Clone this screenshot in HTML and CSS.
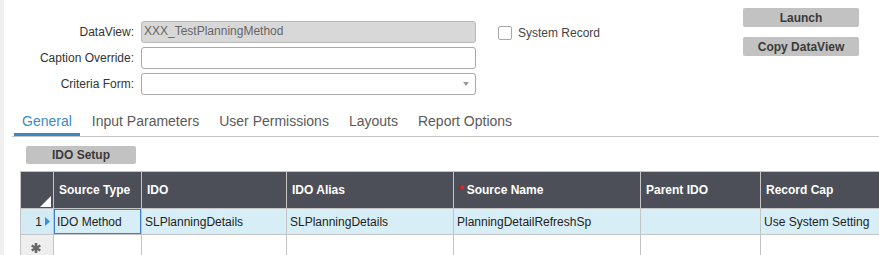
FILE: index.html
```html
<!DOCTYPE html>
<html>
<head>
<meta charset="utf-8">
<link rel="stylesheet" href="styles.css">
</head>
<body>
<div class="page">
  <div class="top">
    <div class="fields">
      <label class="lbl">DataView:</label>
      <div class="input ro">XXX_TestPlanningMethod</div>
      <label class="lbl">Caption Override:</label>
      <div class="input"></div>
      <label class="lbl">Criteria Form:</label>
      <div class="input select"><span class="caret"></span></div>
    </div>
    <label class="check"><span class="box"></span>System Record</label>
    <div class="actions">
      <button class="btn">Launch</button>
      <button class="btn">Copy DataView</button>
    </div>
  </div>
  <nav class="tabs">
    <span class="tab active">General</span>
    <span class="tab">Input Parameters</span>
    <span class="tab">User Permissions</span>
    <span class="tab">Layouts</span>
    <span class="tab">Report Options</span>
  </nav>
  <div class="toolbar"><button class="btn ido">IDO Setup</button></div>
  <div class="grid">
    <div class="hd corner"><svg width="11" height="11" viewBox="0 0 11 11"><polygon points="11,0 11,11 0,11" fill="#fff"/></svg></div>
    <div class="hd">Source Type</div>
    <div class="hd">IDO</div>
    <div class="hd">IDO Alias</div>
    <div class="hd"><span class="req">*</span>Source Name</div>
    <div class="hd">Parent IDO</div>
    <div class="hd">Record Cap</div>

    <div class="rh cur">1<svg class="ptr" width="5" height="9" viewBox="0 0 5 9"><polygon points="0,0 5,4.5 0,9" fill="#3b8fdc"/></svg></div>
    <div class="cell sel-row focus">IDO Method</div>
    <div class="cell sel-row">SLPlanningDetails</div>
    <div class="cell sel-row">SLPlanningDetails</div>
    <div class="cell sel-row">PlanningDetailRefreshSp</div>
    <div class="cell sel-row"></div>
    <div class="cell sel-row">Use System Setting</div>

    <div class="rh new"><svg width="10" height="10" viewBox="0 0 10 10"><g stroke="#686868" stroke-width="2.6"><line x1="5" y1="0" x2="5" y2="10"/><line x1="0.7" y1="2.5" x2="9.3" y2="7.5"/><line x1="0.7" y1="7.5" x2="9.3" y2="2.5"/></g></svg></div>
    <div class="cell"></div>
    <div class="cell"></div>
    <div class="cell"></div>
    <div class="cell"></div>
    <div class="cell"></div>
    <div class="cell"></div>
  </div>
</div>
</body>
</html>
```

FILE: styles.css
```css
html, body {
  margin: 0;
  padding: 0;
}
body {
  width: 879px;
  height: 255px;
  overflow: hidden;
  background: #fff;
  font-family: "Liberation Sans", Arial, sans-serif;
  color: #333;
}
.page {
  border-left: 4px solid #f0f0f0;
  height: 255px;
  box-sizing: border-box;
}
.top {
  display: flex;
  align-items: flex-start;
  padding-top: 8px;
}
.fields {
  display: grid;
  grid-template-columns: 130px 335px;
  grid-auto-rows: 22px;
  column-gap: 7px;
  row-gap: 4px;
  margin-top: 13px;
}
.lbl {
  font-size: 12px;
  color: #333;
  text-align: right;
  align-self: center;
}
.input {
  position: relative;
  box-sizing: border-box;
  height: 22px;
  border: 1px solid #a9a9a9;
  border-radius: 3px;
  background: #fff;
  font-size: 12px;
  line-height: 18px;
  padding: 0 2px;
}
.input.ro {
  background: #d8d8d8;
  border-color: #b9b9b9;
  color: #666;
}
.caret {
  position: absolute;
  right: 6px;
  top: 8px;
  width: 0;
  height: 0;
  border-left: 3px solid transparent;
  border-right: 3px solid transparent;
  border-top: 4px solid #9a9a9a;
}
.check {
  display: flex;
  align-items: center;
  gap: 6px;
  margin-left: 22px;
  margin-top: 18px;
  font-size: 12px;
  color: #444;
}
.box {
  width: 14px;
  height: 14px;
  box-sizing: border-box;
  border: 1px solid #a8a8a8;
  border-radius: 2px;
  background: #fff;
}
.actions {
  margin-left: auto;
  margin-right: 20px;
  display: flex;
  flex-direction: column;
  gap: 10px;
  width: 116px;
}
.btn {
  height: 19px;
  border: none;
  border-radius: 2px;
  background: #c2c2c2;
  font-family: "Liberation Sans", Arial, sans-serif;
  font-weight: bold;
  font-size: 12px;
  color: #3a3a3a;
  padding: 0;
}
.tabs {
  display: flex;
  margin-left: 8px;
  margin-top: 14px;
  border-bottom: 1px solid #c4c4c4;
}
.tab {
  padding: 4px 8px 3px;
  margin-right: 4px;
  font-size: 14px;
  line-height: 17px;
  color: #5a5a5a;
  border-bottom: 3px solid transparent;
}
.tab:first-child {
  margin-left: 2px;
}
.tab.active {
  color: #3d8bc8;
  border-bottom-color: #3a87c4;
}
.toolbar {
  margin-top: 8px;
  margin-left: 22px;
}
.btn.ido {
  width: 110px;
  height: 18px;
}
.grid {
  margin-top: 7px;
  margin-left: 16px;
  display: grid;
  grid-template-columns: 33px 88px 145px 167px 187px 120px 160px;
  grid-template-rows: 37px;
  grid-auto-rows: 26px;
  width: max-content;
  border-top: 1px solid #c4c4c4;
  border-left: 1px solid #c4c4c4;
}
.grid > div {
  box-sizing: border-box;
  border-right: 1px solid #c4c4c4;
  border-bottom: 1px solid #c4c4c4;
  font-size: 12px;
  display: flex;
  align-items: center;
  white-space: nowrap;
  overflow: hidden;
}
.hd {
  background: #4c4f57;
  color: #fff;
  font-weight: bold;
  padding-left: 5px;
}
.hd.corner {
  justify-content: flex-end;
  align-items: flex-end;
  padding: 0 2px 1px 0;
}
.req {
  color: #e02020;
  font-weight: bold;
  margin-right: 3px;
}
.rh {
  justify-content: flex-end;
  padding-right: 3px;
  color: #222;
}
.rh.cur {
  background: #d3ebf5;
}
.rh .ptr {
  margin-left: 3px;
}
.rh.new {
  background: #eeeeee;
  justify-content: center;
  padding-right: 2px;
}
.cell {
  padding-left: 3px;
  color: #222;
}
.cell.sel-row {
  background: #d8eef6;
}
.cell.focus {
  box-shadow: inset 0 0 0 1px #3c7ccc;
}
```
